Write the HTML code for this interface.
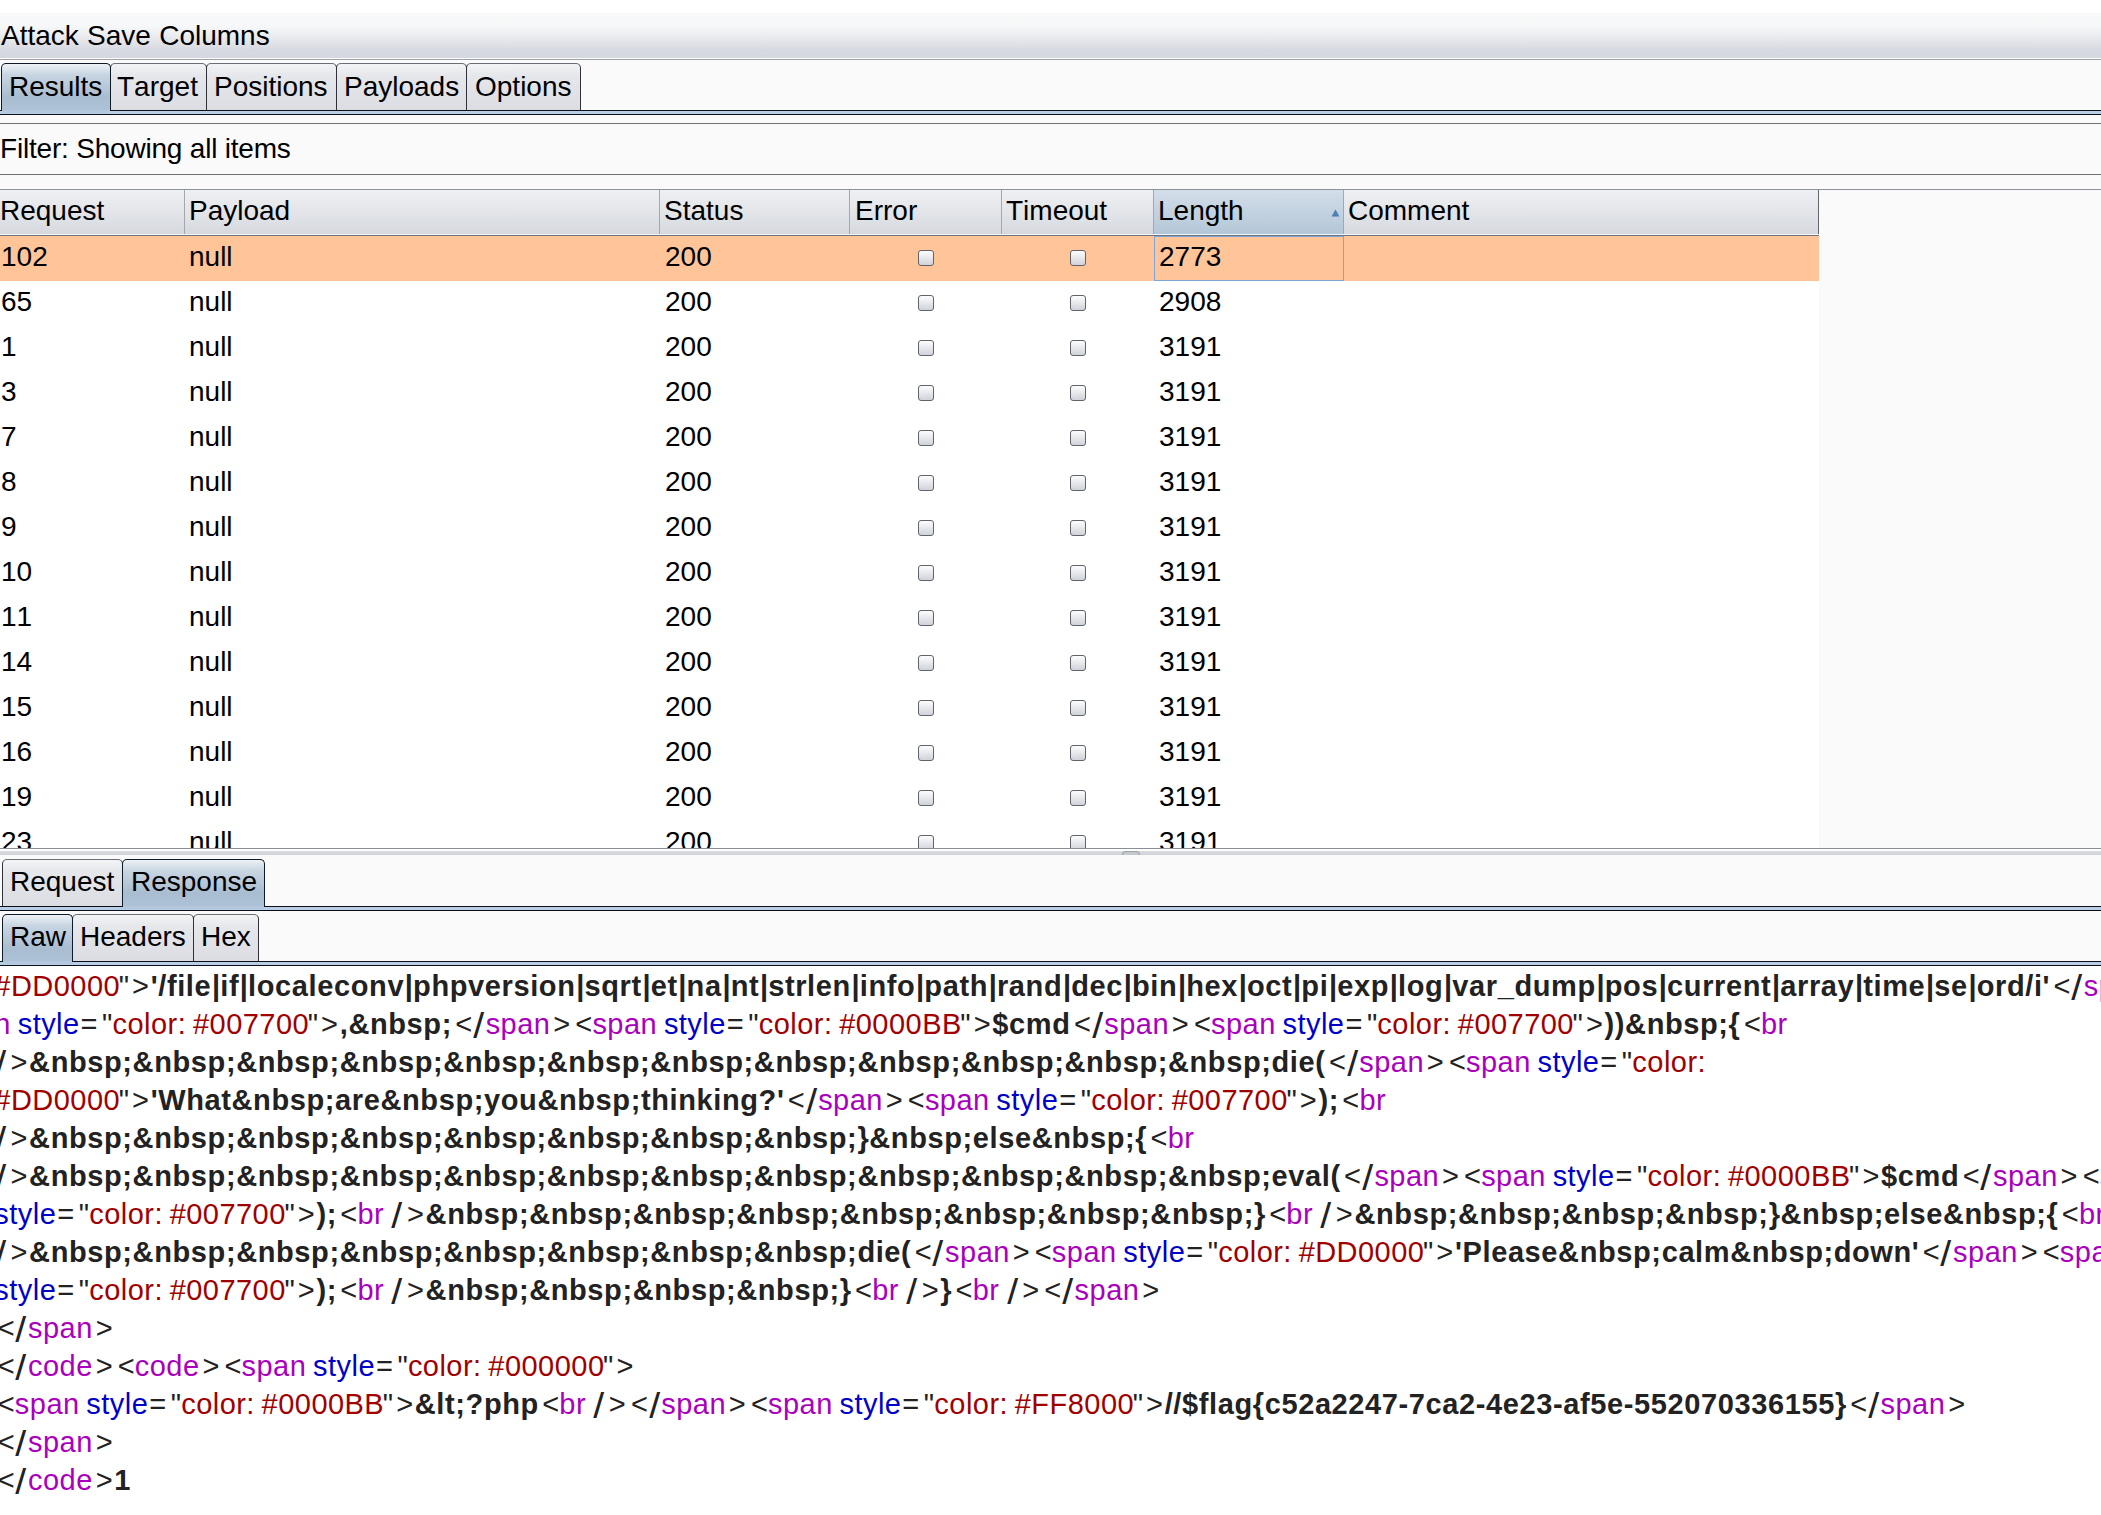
<!DOCTYPE html>
<html><head><meta charset="utf-8"><style>
html,body{margin:0;padding:0;}
body{width:2101px;height:1515px;position:relative;overflow:hidden;background:#fafafa;font-family:"Liberation Sans",sans-serif;color:#000;font-kerning:none;}
.abs{position:absolute;}
.t{position:absolute;white-space:pre;font-size:28px;line-height:28px;}
.tab{position:absolute;box-sizing:border-box;border:1px solid #2e313a;border-top-color:#6b6e76;border-bottom:none;border-radius:5px 5px 0 0;background:linear-gradient(#f3f4f6 0%,#e6e7eb 25%,#dcdde2 100%);}
.tab.sel{border-color:#0f1a28;background:linear-gradient(#eef2f6 0%,#c9d6e2 22%,#a9bdd1 70%,#adc2d6 100%);}
.tab span{position:absolute;white-space:pre;font-size:28px;line-height:28px;}
.hl{position:absolute;left:0;width:2101px;height:1px;}
.hdr{position:absolute;top:190px;height:44px;box-sizing:border-box;border-right:1px solid #a3a7ae;background:linear-gradient(#eff0f3,#d6d9df);}
.hdr.sort{background:linear-gradient(#d3dee9,#b3c6d7);}
.cb{position:absolute;width:16px;height:16px;box-sizing:border-box;border:1px solid #5f636b;border-radius:3px;background:linear-gradient(#fdfdfe,#d0d3da);}
.ln{position:absolute;left:0;white-space:pre;font-size:29px;line-height:29px;font-kerning:none;}
.p{color:#222;}
.n{color:#aa00be;}
.a{color:#0000c8;}
.v{color:#a00000;}
.b{font-weight:bold;color:#222;}
</style></head><body>
<div class="abs" style="left:0px;top:0px;width:2101px;height:13px;background:#fff;"></div>
<div class="abs" style="left:0px;top:13px;width:2101px;height:45px;background:linear-gradient(#f8f9f9 0%,#f6f7f8 30%,#e4e6ea 62%,#d6d9e0 82%,#d5d8df 100%);"></div>
<div class="abs" style="left:0px;top:58px;width:2101px;height:1px;background:#fdfdfd;"></div>
<div class="abs" style="left:0px;top:59px;width:2101px;height:1px;background:#9da0a7;"></div>
<div class="t" style="left:1px;top:22px;word-spacing:0.5px;">Attack Save Columns</div>
<div class="tab" style="left:110px;top:63px;width:97px;height:47px"><span style="left:6px;top:9px">Target</span></div>
<div class="tab" style="left:206px;top:63px;width:131px;height:47px"><span style="left:7px;top:9px">Positions</span></div>
<div class="tab" style="left:336px;top:63px;width:131px;height:47px"><span style="left:7px;top:9px">Payloads</span></div>
<div class="tab" style="left:466px;top:63px;width:115px;height:47px"><span style="left:8px;top:9px">Options</span></div>
<div class="hl" style="top:110px;background:#0c0e1a"></div>
<div class="hl" style="top:111px;height:3px;background:#b9cee4"></div>
<div class="hl" style="top:114px;background:#0c0e1a"></div>
<div class="tab sel" style="left:1px;top:63px;width:110px;height:48px"><span style="left:7px;top:9px">Results</span></div>
<div class="abs" style="left:2px;top:110px;width:108px;height:3px;background:#b3c8dd"></div>
<div class="abs" style="left:0px;top:123px;width:2101px;height:1px;background:#727272;"></div>
<div class="t" style="left:0px;top:135px;letter-spacing:-0.2px;">Filter: Showing all items</div>
<div class="abs" style="left:0px;top:174px;width:2101px;height:1px;background:#727272;"></div>
<div class="abs" style="left:0px;top:189px;width:2101px;height:1px;background:#8e939b;"></div>
<div class="hdr" style="left:0px;width:185px;"><span class="t" style="left:0px;top:7px">Request</span></div>
<div class="hdr" style="left:185px;width:475px;"><span class="t" style="left:4px;top:7px">Payload</span></div>
<div class="hdr" style="left:660px;width:190px;"><span class="t" style="left:4px;top:7px">Status</span></div>
<div class="hdr" style="left:850px;width:152px;"><span class="t" style="left:5px;top:7px">Error</span></div>
<div class="hdr" style="left:1002px;width:152px;"><span class="t" style="left:4px;top:7px">Timeout</span></div>
<div class="hdr sort" style="left:1154px;width:190px;"><span class="t" style="left:4px;top:7px">Length</span></div>
<div class="hdr" style="left:1344px;width:475px;border-right-color:#62656d;"><span class="t" style="left:4px;top:7px">Comment</span></div>
<div class="abs" style="left:0px;top:234px;width:1819px;height:1px;background:#f3f5f9;"></div>
<div class="abs" style="left:0px;top:235px;width:1819px;height:1px;background:#70747c;"></div>
<svg class="abs" style="left:1331px;top:209px" width="9" height="8"><path d="M4.5 0.5 L8.5 7.5 L0.5 7.5 Z" fill="#4f7fb3"/></svg>
<div class="abs" style="left:0;top:236px;width:2101px;height:612px;overflow:hidden">
<div class="abs" style="left:0;top:0px;width:1819px;height:45px;background:#ffc599">
<span class="t" style="left:1px;top:7px">102</span>
<span class="t" style="left:189px;top:7px">null</span>
<span class="t" style="left:665px;top:7px">200</span>
<div class="cb" style="left:918px;top:14px"></div>
<div class="cb" style="left:1070px;top:14px"></div>
<span class="t" style="left:1159px;top:7px">2773</span>
<div class="abs" style="left:1154px;top:0;width:190px;height:45px;box-sizing:border-box;border:1px solid #7ea6d6"></div>
</div>
<div class="abs" style="left:0;top:45px;width:1819px;height:45px;background:#fff">
<span class="t" style="left:1px;top:7px">65</span>
<span class="t" style="left:189px;top:7px">null</span>
<span class="t" style="left:665px;top:7px">200</span>
<div class="cb" style="left:918px;top:14px"></div>
<div class="cb" style="left:1070px;top:14px"></div>
<span class="t" style="left:1159px;top:7px">2908</span>
</div>
<div class="abs" style="left:0;top:90px;width:1819px;height:45px;background:#fff">
<span class="t" style="left:1px;top:7px">1</span>
<span class="t" style="left:189px;top:7px">null</span>
<span class="t" style="left:665px;top:7px">200</span>
<div class="cb" style="left:918px;top:14px"></div>
<div class="cb" style="left:1070px;top:14px"></div>
<span class="t" style="left:1159px;top:7px">3191</span>
</div>
<div class="abs" style="left:0;top:135px;width:1819px;height:45px;background:#fff">
<span class="t" style="left:1px;top:7px">3</span>
<span class="t" style="left:189px;top:7px">null</span>
<span class="t" style="left:665px;top:7px">200</span>
<div class="cb" style="left:918px;top:14px"></div>
<div class="cb" style="left:1070px;top:14px"></div>
<span class="t" style="left:1159px;top:7px">3191</span>
</div>
<div class="abs" style="left:0;top:180px;width:1819px;height:45px;background:#fff">
<span class="t" style="left:1px;top:7px">7</span>
<span class="t" style="left:189px;top:7px">null</span>
<span class="t" style="left:665px;top:7px">200</span>
<div class="cb" style="left:918px;top:14px"></div>
<div class="cb" style="left:1070px;top:14px"></div>
<span class="t" style="left:1159px;top:7px">3191</span>
</div>
<div class="abs" style="left:0;top:225px;width:1819px;height:45px;background:#fff">
<span class="t" style="left:1px;top:7px">8</span>
<span class="t" style="left:189px;top:7px">null</span>
<span class="t" style="left:665px;top:7px">200</span>
<div class="cb" style="left:918px;top:14px"></div>
<div class="cb" style="left:1070px;top:14px"></div>
<span class="t" style="left:1159px;top:7px">3191</span>
</div>
<div class="abs" style="left:0;top:270px;width:1819px;height:45px;background:#fff">
<span class="t" style="left:1px;top:7px">9</span>
<span class="t" style="left:189px;top:7px">null</span>
<span class="t" style="left:665px;top:7px">200</span>
<div class="cb" style="left:918px;top:14px"></div>
<div class="cb" style="left:1070px;top:14px"></div>
<span class="t" style="left:1159px;top:7px">3191</span>
</div>
<div class="abs" style="left:0;top:315px;width:1819px;height:45px;background:#fff">
<span class="t" style="left:1px;top:7px">10</span>
<span class="t" style="left:189px;top:7px">null</span>
<span class="t" style="left:665px;top:7px">200</span>
<div class="cb" style="left:918px;top:14px"></div>
<div class="cb" style="left:1070px;top:14px"></div>
<span class="t" style="left:1159px;top:7px">3191</span>
</div>
<div class="abs" style="left:0;top:360px;width:1819px;height:45px;background:#fff">
<span class="t" style="left:1px;top:7px">11</span>
<span class="t" style="left:189px;top:7px">null</span>
<span class="t" style="left:665px;top:7px">200</span>
<div class="cb" style="left:918px;top:14px"></div>
<div class="cb" style="left:1070px;top:14px"></div>
<span class="t" style="left:1159px;top:7px">3191</span>
</div>
<div class="abs" style="left:0;top:405px;width:1819px;height:45px;background:#fff">
<span class="t" style="left:1px;top:7px">14</span>
<span class="t" style="left:189px;top:7px">null</span>
<span class="t" style="left:665px;top:7px">200</span>
<div class="cb" style="left:918px;top:14px"></div>
<div class="cb" style="left:1070px;top:14px"></div>
<span class="t" style="left:1159px;top:7px">3191</span>
</div>
<div class="abs" style="left:0;top:450px;width:1819px;height:45px;background:#fff">
<span class="t" style="left:1px;top:7px">15</span>
<span class="t" style="left:189px;top:7px">null</span>
<span class="t" style="left:665px;top:7px">200</span>
<div class="cb" style="left:918px;top:14px"></div>
<div class="cb" style="left:1070px;top:14px"></div>
<span class="t" style="left:1159px;top:7px">3191</span>
</div>
<div class="abs" style="left:0;top:495px;width:1819px;height:45px;background:#fff">
<span class="t" style="left:1px;top:7px">16</span>
<span class="t" style="left:189px;top:7px">null</span>
<span class="t" style="left:665px;top:7px">200</span>
<div class="cb" style="left:918px;top:14px"></div>
<div class="cb" style="left:1070px;top:14px"></div>
<span class="t" style="left:1159px;top:7px">3191</span>
</div>
<div class="abs" style="left:0;top:540px;width:1819px;height:45px;background:#fff">
<span class="t" style="left:1px;top:7px">19</span>
<span class="t" style="left:189px;top:7px">null</span>
<span class="t" style="left:665px;top:7px">200</span>
<div class="cb" style="left:918px;top:14px"></div>
<div class="cb" style="left:1070px;top:14px"></div>
<span class="t" style="left:1159px;top:7px">3191</span>
</div>
<div class="abs" style="left:0;top:585px;width:1819px;height:45px;background:#fff">
<span class="t" style="left:1px;top:7px">23</span>
<span class="t" style="left:189px;top:7px">null</span>
<span class="t" style="left:665px;top:7px">200</span>
<div class="cb" style="left:918px;top:14px"></div>
<div class="cb" style="left:1070px;top:14px"></div>
<span class="t" style="left:1159px;top:7px">3191</span>
</div>
</div>
<div class="abs" style="left:0px;top:848px;width:2101px;height:1px;background:#8a8e97;"></div>
<div class="abs" style="left:0px;top:849px;width:2101px;height:2px;background:#fff;"></div>
<div class="abs" style="left:0px;top:851px;width:2101px;height:4px;background:linear-gradient(#d9dce2,#cfd3d9);"></div>
<div class="abs" style="left:1122px;top:851px;width:18px;height:4px;box-sizing:border-box;border:1px solid #9ea2aa;border-bottom:none;border-radius:4px 4px 0 0;background:#c3c7ce"></div>
<div class="tab" style="left:2px;top:859px;width:121px;height:47px"><span style="left:7px;top:8px">Request</span></div>
<div class="hl" style="top:906px;background:#0c0e1a"></div>
<div class="hl" style="top:907px;height:3px;background:#b9cee4"></div>
<div class="hl" style="top:910px;background:#0c0e1a"></div>
<div class="tab sel" style="left:122px;top:859px;width:143px;height:48px"><span style="left:8px;top:8px">Response</span></div>
<div class="abs" style="left:123px;top:906px;width:141px;height:3px;background:#b3c8dd"></div>
<div class="tab" style="left:72px;top:914px;width:122px;height:47px"><span style="left:7px;top:8px">Headers</span></div>
<div class="tab" style="left:193px;top:914px;width:66px;height:47px"><span style="left:7px;top:8px">Hex</span></div>
<div class="hl" style="top:961px;background:#0c0e1a"></div>
<div class="hl" style="top:962px;height:3px;background:#b9cee4"></div>
<div class="hl" style="top:965px;background:#0c0e1a"></div>
<div class="tab sel" style="left:2px;top:914px;width:71px;height:48px"><span style="left:7px;top:8px">Raw</span></div>
<div class="abs" style="left:3px;top:961px;width:69px;height:3px;background:#b3c8dd"></div>
<div class="abs" style="left:0;top:966px;width:2101px;height:549px;background:#fff;overflow:hidden">
<div class="ln" style="left:-5.658px;top:6px"><span class="v" style="letter-spacing:0.463px">#DD0000</span><span class="p" style="letter-spacing:0.189px;margin-left:-1.40px">&quot;</span><span class="p" style="letter-spacing:1.729px;margin-left:2.85px">&gt;</span><span class="b" style="letter-spacing:0.611px">&#x27;/file</span><span class="b" style="letter-spacing:0.131px;margin-left:0.71px">|</span><span class="b" style="letter-spacing:0.611px">if</span><span class="b" style="letter-spacing:0.131px;margin-left:0.71px">|</span><span class="b" style="letter-spacing:0.611px">localeconv</span><span class="b" style="letter-spacing:0.131px;margin-left:0.71px">|</span><span class="b" style="letter-spacing:0.611px">phpversion</span><span class="b" style="letter-spacing:0.131px;margin-left:0.71px">|</span><span class="b" style="letter-spacing:0.611px">sqrt</span><span class="b" style="letter-spacing:0.131px;margin-left:0.71px">|</span><span class="b" style="letter-spacing:0.611px">et</span><span class="b" style="letter-spacing:0.131px;margin-left:0.71px">|</span><span class="b" style="letter-spacing:0.611px">na</span><span class="b" style="letter-spacing:0.131px;margin-left:0.71px">|</span><span class="b" style="letter-spacing:0.611px">nt</span><span class="b" style="letter-spacing:0.131px;margin-left:0.71px">|</span><span class="b" style="letter-spacing:0.611px">strlen</span><span class="b" style="letter-spacing:0.131px;margin-left:0.71px">|</span><span class="b" style="letter-spacing:0.611px">info</span><span class="b" style="letter-spacing:0.131px;margin-left:0.71px">|</span><span class="b" style="letter-spacing:0.611px">path</span><span class="b" style="letter-spacing:0.131px;margin-left:0.71px">|</span><span class="b" style="letter-spacing:0.611px">rand</span><span class="b" style="letter-spacing:0.131px;margin-left:0.71px">|</span><span class="b" style="letter-spacing:0.611px">dec</span><span class="b" style="letter-spacing:0.131px;margin-left:0.71px">|</span><span class="b" style="letter-spacing:0.611px">bin</span><span class="b" style="letter-spacing:0.131px;margin-left:0.71px">|</span><span class="b" style="letter-spacing:0.611px">hex</span><span class="b" style="letter-spacing:0.131px;margin-left:0.71px">|</span><span class="b" style="letter-spacing:0.611px">oct</span><span class="b" style="letter-spacing:0.131px;margin-left:0.71px">|</span><span class="b" style="letter-spacing:0.611px">pi</span><span class="b" style="letter-spacing:0.131px;margin-left:0.71px">|</span><span class="b" style="letter-spacing:0.611px">exp</span><span class="b" style="letter-spacing:0.131px;margin-left:0.71px">|</span><span class="b" style="letter-spacing:0.611px">log</span><span class="b" style="letter-spacing:0.131px;margin-left:0.71px">|</span><span class="b" style="letter-spacing:0.611px">var_dump</span><span class="b" style="letter-spacing:0.131px;margin-left:0.71px">|</span><span class="b" style="letter-spacing:0.611px">pos</span><span class="b" style="letter-spacing:0.131px;margin-left:0.71px">|</span><span class="b" style="letter-spacing:0.611px">current</span><span class="b" style="letter-spacing:0.131px;margin-left:0.71px">|</span><span class="b" style="letter-spacing:0.611px">array</span><span class="b" style="letter-spacing:0.131px;margin-left:0.71px">|</span><span class="b" style="letter-spacing:0.611px">time</span><span class="b" style="letter-spacing:0.131px;margin-left:0.71px">|</span><span class="b" style="letter-spacing:0.611px">se</span><span class="b" style="letter-spacing:0.131px;margin-left:0.71px">|</span><span class="b" style="letter-spacing:0.611px">ord/i&#x27;</span><span class="p" style="letter-spacing:0.159px;margin-left:3.39px">&lt;</span><span class="p" style="letter-spacing:2.549px;margin-left:2.61px;display:inline-block;transform:translateY(1.6px) scale(1.35,1.22)">/</span><span class="n" style="letter-spacing:0.463px">span</span><span class="p" style="letter-spacing:1.729px;margin-left:2.85px">&gt;</span><span class="p" style="letter-spacing:0.159px;margin-left:3.39px">&lt;</span><span class="n" style="letter-spacing:0.463px">span</span></div>
<div class="ln" style="left:-5.658px;top:44px"><span class="n" style="letter-spacing:0.463px">n</span><span class="p" style="letter-spacing:-1.323px"> </span><span class="a" style="letter-spacing:0.463px">style</span><span class="p" style="letter-spacing:5.934px;margin-left:0.94px">=</span><span class="p" style="letter-spacing:0.189px;margin-left:-1.40px">&quot;</span><span class="v" style="letter-spacing:0.463px">color:</span><span class="v" style="letter-spacing:-1.323px"> </span><span class="v" style="letter-spacing:0.463px">#007700</span><span class="p" style="letter-spacing:0.189px;margin-left:-1.40px">&quot;</span><span class="p" style="letter-spacing:1.729px;margin-left:2.85px">&gt;</span><span class="b" style="letter-spacing:0.611px">,&amp;nbsp;</span><span class="p" style="letter-spacing:0.159px;margin-left:3.39px">&lt;</span><span class="p" style="letter-spacing:2.549px;margin-left:2.61px;display:inline-block;transform:translateY(1.6px) scale(1.35,1.22)">/</span><span class="n" style="letter-spacing:0.463px">span</span><span class="p" style="letter-spacing:1.729px;margin-left:2.85px">&gt;</span><span class="p" style="letter-spacing:0.159px;margin-left:3.39px">&lt;</span><span class="n" style="letter-spacing:0.463px">span</span><span class="p" style="letter-spacing:-1.323px"> </span><span class="a" style="letter-spacing:0.463px">style</span><span class="p" style="letter-spacing:5.934px;margin-left:0.94px">=</span><span class="p" style="letter-spacing:0.189px;margin-left:-1.40px">&quot;</span><span class="v" style="letter-spacing:0.463px">color:</span><span class="v" style="letter-spacing:-1.323px"> </span><span class="v" style="letter-spacing:0.463px">#0000BB</span><span class="p" style="letter-spacing:0.189px;margin-left:-1.40px">&quot;</span><span class="p" style="letter-spacing:1.729px;margin-left:2.85px">&gt;</span><span class="b" style="letter-spacing:0.611px">$cmd</span><span class="p" style="letter-spacing:0.159px;margin-left:3.39px">&lt;</span><span class="p" style="letter-spacing:2.549px;margin-left:2.61px;display:inline-block;transform:translateY(1.6px) scale(1.35,1.22)">/</span><span class="n" style="letter-spacing:0.463px">span</span><span class="p" style="letter-spacing:1.729px;margin-left:2.85px">&gt;</span><span class="p" style="letter-spacing:0.159px;margin-left:3.39px">&lt;</span><span class="n" style="letter-spacing:0.463px">span</span><span class="p" style="letter-spacing:-1.323px"> </span><span class="a" style="letter-spacing:0.463px">style</span><span class="p" style="letter-spacing:5.934px;margin-left:0.94px">=</span><span class="p" style="letter-spacing:0.189px;margin-left:-1.40px">&quot;</span><span class="v" style="letter-spacing:0.463px">color:</span><span class="v" style="letter-spacing:-1.323px"> </span><span class="v" style="letter-spacing:0.463px">#007700</span><span class="p" style="letter-spacing:0.189px;margin-left:-1.40px">&quot;</span><span class="p" style="letter-spacing:1.729px;margin-left:2.85px">&gt;</span><span class="b" style="letter-spacing:0.611px">))&amp;nbsp;{</span><span class="p" style="letter-spacing:0.159px;margin-left:3.39px">&lt;</span><span class="n" style="letter-spacing:0.463px">br</span></div>
<div class="ln" style="left:-5.658px;top:82px"><span class="p" style="letter-spacing:2.549px;margin-left:2.61px;display:inline-block;transform:translateY(1.6px) scale(1.35,1.22)">/</span><span class="p" style="letter-spacing:1.729px;margin-left:2.85px">&gt;</span><span class="b" style="letter-spacing:0.611px">&amp;nbsp;&amp;nbsp;&amp;nbsp;&amp;nbsp;&amp;nbsp;&amp;nbsp;&amp;nbsp;&amp;nbsp;&amp;nbsp;&amp;nbsp;&amp;nbsp;&amp;nbsp;die(</span><span class="p" style="letter-spacing:0.159px;margin-left:3.39px">&lt;</span><span class="p" style="letter-spacing:2.549px;margin-left:2.61px;display:inline-block;transform:translateY(1.6px) scale(1.35,1.22)">/</span><span class="n" style="letter-spacing:0.463px">span</span><span class="p" style="letter-spacing:1.729px;margin-left:2.85px">&gt;</span><span class="p" style="letter-spacing:0.159px;margin-left:3.39px">&lt;</span><span class="n" style="letter-spacing:0.463px">span</span><span class="p" style="letter-spacing:-1.323px"> </span><span class="a" style="letter-spacing:0.463px">style</span><span class="p" style="letter-spacing:5.934px;margin-left:0.94px">=</span><span class="p" style="letter-spacing:0.189px;margin-left:-1.40px">&quot;</span><span class="v" style="letter-spacing:0.463px">color:</span></div>
<div class="ln" style="left:-5.658px;top:120px"><span class="v" style="letter-spacing:0.463px">#DD0000</span><span class="p" style="letter-spacing:0.189px;margin-left:-1.40px">&quot;</span><span class="p" style="letter-spacing:1.729px;margin-left:2.85px">&gt;</span><span class="b" style="letter-spacing:0.611px">&#x27;What&amp;nbsp;are&amp;nbsp;you&amp;nbsp;thinking?&#x27;</span><span class="p" style="letter-spacing:0.159px;margin-left:3.39px">&lt;</span><span class="p" style="letter-spacing:2.549px;margin-left:2.61px;display:inline-block;transform:translateY(1.6px) scale(1.35,1.22)">/</span><span class="n" style="letter-spacing:0.463px">span</span><span class="p" style="letter-spacing:1.729px;margin-left:2.85px">&gt;</span><span class="p" style="letter-spacing:0.159px;margin-left:3.39px">&lt;</span><span class="n" style="letter-spacing:0.463px">span</span><span class="p" style="letter-spacing:-1.323px"> </span><span class="a" style="letter-spacing:0.463px">style</span><span class="p" style="letter-spacing:5.934px;margin-left:0.94px">=</span><span class="p" style="letter-spacing:0.189px;margin-left:-1.40px">&quot;</span><span class="v" style="letter-spacing:0.463px">color:</span><span class="v" style="letter-spacing:-1.323px"> </span><span class="v" style="letter-spacing:0.463px">#007700</span><span class="p" style="letter-spacing:0.189px;margin-left:-1.40px">&quot;</span><span class="p" style="letter-spacing:1.729px;margin-left:2.85px">&gt;</span><span class="b" style="letter-spacing:0.611px">);</span><span class="p" style="letter-spacing:0.159px;margin-left:3.39px">&lt;</span><span class="n" style="letter-spacing:0.463px">br</span></div>
<div class="ln" style="left:-5.658px;top:158px"><span class="p" style="letter-spacing:2.549px;margin-left:2.61px;display:inline-block;transform:translateY(1.6px) scale(1.35,1.22)">/</span><span class="p" style="letter-spacing:1.729px;margin-left:2.85px">&gt;</span><span class="b" style="letter-spacing:0.611px">&amp;nbsp;&amp;nbsp;&amp;nbsp;&amp;nbsp;&amp;nbsp;&amp;nbsp;&amp;nbsp;&amp;nbsp;}&amp;nbsp;else&amp;nbsp;{</span><span class="p" style="letter-spacing:0.159px;margin-left:3.39px">&lt;</span><span class="n" style="letter-spacing:0.463px">br</span></div>
<div class="ln" style="left:-5.658px;top:196px"><span class="p" style="letter-spacing:2.549px;margin-left:2.61px;display:inline-block;transform:translateY(1.6px) scale(1.35,1.22)">/</span><span class="p" style="letter-spacing:1.729px;margin-left:2.85px">&gt;</span><span class="b" style="letter-spacing:0.611px">&amp;nbsp;&amp;nbsp;&amp;nbsp;&amp;nbsp;&amp;nbsp;&amp;nbsp;&amp;nbsp;&amp;nbsp;&amp;nbsp;&amp;nbsp;&amp;nbsp;&amp;nbsp;eval(</span><span class="p" style="letter-spacing:0.159px;margin-left:3.39px">&lt;</span><span class="p" style="letter-spacing:2.549px;margin-left:2.61px;display:inline-block;transform:translateY(1.6px) scale(1.35,1.22)">/</span><span class="n" style="letter-spacing:0.463px">span</span><span class="p" style="letter-spacing:1.729px;margin-left:2.85px">&gt;</span><span class="p" style="letter-spacing:0.159px;margin-left:3.39px">&lt;</span><span class="n" style="letter-spacing:0.463px">span</span><span class="p" style="letter-spacing:-1.323px"> </span><span class="a" style="letter-spacing:0.463px">style</span><span class="p" style="letter-spacing:5.934px;margin-left:0.94px">=</span><span class="p" style="letter-spacing:0.189px;margin-left:-1.40px">&quot;</span><span class="v" style="letter-spacing:0.463px">color:</span><span class="v" style="letter-spacing:-1.323px"> </span><span class="v" style="letter-spacing:0.463px">#0000BB</span><span class="p" style="letter-spacing:0.189px;margin-left:-1.40px">&quot;</span><span class="p" style="letter-spacing:1.729px;margin-left:2.85px">&gt;</span><span class="b" style="letter-spacing:0.611px">$cmd</span><span class="p" style="letter-spacing:0.159px;margin-left:3.39px">&lt;</span><span class="p" style="letter-spacing:2.549px;margin-left:2.61px;display:inline-block;transform:translateY(1.6px) scale(1.35,1.22)">/</span><span class="n" style="letter-spacing:0.463px">span</span><span class="p" style="letter-spacing:1.729px;margin-left:2.85px">&gt;</span><span class="p" style="letter-spacing:0.159px;margin-left:3.39px">&lt;</span><span class="n" style="letter-spacing:0.463px">span</span><span class="p" style="letter-spacing:-1.323px"> </span></div>
<div class="ln" style="left:-5.658px;top:234px"><span class="a" style="letter-spacing:0.463px">style</span><span class="p" style="letter-spacing:5.934px;margin-left:0.94px">=</span><span class="p" style="letter-spacing:0.189px;margin-left:-1.40px">&quot;</span><span class="v" style="letter-spacing:0.463px">color:</span><span class="v" style="letter-spacing:-1.323px"> </span><span class="v" style="letter-spacing:0.463px">#007700</span><span class="p" style="letter-spacing:0.189px;margin-left:-1.40px">&quot;</span><span class="p" style="letter-spacing:1.729px;margin-left:2.85px">&gt;</span><span class="b" style="letter-spacing:0.611px">);</span><span class="p" style="letter-spacing:0.159px;margin-left:3.39px">&lt;</span><span class="n" style="letter-spacing:0.463px">br</span><span class="p" style="letter-spacing:-1.323px"> </span><span class="p" style="letter-spacing:2.549px;margin-left:2.61px;display:inline-block;transform:translateY(1.6px) scale(1.35,1.22)">/</span><span class="p" style="letter-spacing:1.729px;margin-left:2.85px">&gt;</span><span class="b" style="letter-spacing:0.611px">&amp;nbsp;&amp;nbsp;&amp;nbsp;&amp;nbsp;&amp;nbsp;&amp;nbsp;&amp;nbsp;&amp;nbsp;}</span><span class="p" style="letter-spacing:0.159px;margin-left:3.39px">&lt;</span><span class="n" style="letter-spacing:0.463px">br</span><span class="p" style="letter-spacing:-1.323px"> </span><span class="p" style="letter-spacing:2.549px;margin-left:2.61px;display:inline-block;transform:translateY(1.6px) scale(1.35,1.22)">/</span><span class="p" style="letter-spacing:1.729px;margin-left:2.85px">&gt;</span><span class="b" style="letter-spacing:0.611px">&amp;nbsp;&amp;nbsp;&amp;nbsp;&amp;nbsp;}&amp;nbsp;else&amp;nbsp;{</span><span class="p" style="letter-spacing:0.159px;margin-left:3.39px">&lt;</span><span class="n" style="letter-spacing:0.463px">br</span><span class="p" style="letter-spacing:-1.323px"> </span></div>
<div class="ln" style="left:-5.658px;top:272px"><span class="p" style="letter-spacing:2.549px;margin-left:2.61px;display:inline-block;transform:translateY(1.6px) scale(1.35,1.22)">/</span><span class="p" style="letter-spacing:1.729px;margin-left:2.85px">&gt;</span><span class="b" style="letter-spacing:0.611px">&amp;nbsp;&amp;nbsp;&amp;nbsp;&amp;nbsp;&amp;nbsp;&amp;nbsp;&amp;nbsp;&amp;nbsp;die(</span><span class="p" style="letter-spacing:0.159px;margin-left:3.39px">&lt;</span><span class="p" style="letter-spacing:2.549px;margin-left:2.61px;display:inline-block;transform:translateY(1.6px) scale(1.35,1.22)">/</span><span class="n" style="letter-spacing:0.463px">span</span><span class="p" style="letter-spacing:1.729px;margin-left:2.85px">&gt;</span><span class="p" style="letter-spacing:0.159px;margin-left:3.39px">&lt;</span><span class="n" style="letter-spacing:0.463px">span</span><span class="p" style="letter-spacing:-1.323px"> </span><span class="a" style="letter-spacing:0.463px">style</span><span class="p" style="letter-spacing:5.934px;margin-left:0.94px">=</span><span class="p" style="letter-spacing:0.189px;margin-left:-1.40px">&quot;</span><span class="v" style="letter-spacing:0.463px">color:</span><span class="v" style="letter-spacing:-1.323px"> </span><span class="v" style="letter-spacing:0.463px">#DD0000</span><span class="p" style="letter-spacing:0.189px;margin-left:-1.40px">&quot;</span><span class="p" style="letter-spacing:1.729px;margin-left:2.85px">&gt;</span><span class="b" style="letter-spacing:0.611px">&#x27;Please&amp;nbsp;calm&amp;nbsp;down&#x27;</span><span class="p" style="letter-spacing:0.159px;margin-left:3.39px">&lt;</span><span class="p" style="letter-spacing:2.549px;margin-left:2.61px;display:inline-block;transform:translateY(1.6px) scale(1.35,1.22)">/</span><span class="n" style="letter-spacing:0.463px">span</span><span class="p" style="letter-spacing:1.729px;margin-left:2.85px">&gt;</span><span class="p" style="letter-spacing:0.159px;margin-left:3.39px">&lt;</span><span class="n" style="letter-spacing:0.463px">span</span><span class="p" style="letter-spacing:-1.323px"> </span></div>
<div class="ln" style="left:-5.658px;top:310px"><span class="a" style="letter-spacing:0.463px">style</span><span class="p" style="letter-spacing:5.934px;margin-left:0.94px">=</span><span class="p" style="letter-spacing:0.189px;margin-left:-1.40px">&quot;</span><span class="v" style="letter-spacing:0.463px">color:</span><span class="v" style="letter-spacing:-1.323px"> </span><span class="v" style="letter-spacing:0.463px">#007700</span><span class="p" style="letter-spacing:0.189px;margin-left:-1.40px">&quot;</span><span class="p" style="letter-spacing:1.729px;margin-left:2.85px">&gt;</span><span class="b" style="letter-spacing:0.611px">);</span><span class="p" style="letter-spacing:0.159px;margin-left:3.39px">&lt;</span><span class="n" style="letter-spacing:0.463px">br</span><span class="p" style="letter-spacing:-1.323px"> </span><span class="p" style="letter-spacing:2.549px;margin-left:2.61px;display:inline-block;transform:translateY(1.6px) scale(1.35,1.22)">/</span><span class="p" style="letter-spacing:1.729px;margin-left:2.85px">&gt;</span><span class="b" style="letter-spacing:0.611px">&amp;nbsp;&amp;nbsp;&amp;nbsp;&amp;nbsp;}</span><span class="p" style="letter-spacing:0.159px;margin-left:3.39px">&lt;</span><span class="n" style="letter-spacing:0.463px">br</span><span class="p" style="letter-spacing:-1.323px"> </span><span class="p" style="letter-spacing:2.549px;margin-left:2.61px;display:inline-block;transform:translateY(1.6px) scale(1.35,1.22)">/</span><span class="p" style="letter-spacing:1.729px;margin-left:2.85px">&gt;</span><span class="b" style="letter-spacing:0.611px">}</span><span class="p" style="letter-spacing:0.159px;margin-left:3.39px">&lt;</span><span class="n" style="letter-spacing:0.463px">br</span><span class="p" style="letter-spacing:-1.323px"> </span><span class="p" style="letter-spacing:2.549px;margin-left:2.61px;display:inline-block;transform:translateY(1.6px) scale(1.35,1.22)">/</span><span class="p" style="letter-spacing:1.729px;margin-left:2.85px">&gt;</span><span class="p" style="letter-spacing:0.159px;margin-left:3.39px">&lt;</span><span class="p" style="letter-spacing:2.549px;margin-left:2.61px;display:inline-block;transform:translateY(1.6px) scale(1.35,1.22)">/</span><span class="n" style="letter-spacing:0.463px">span</span><span class="p" style="letter-spacing:1.729px;margin-left:2.85px">&gt;</span></div>
<div class="ln" style="left:-5.658px;top:348px"><span class="p" style="letter-spacing:0.159px;margin-left:3.39px">&lt;</span><span class="p" style="letter-spacing:2.549px;margin-left:2.61px;display:inline-block;transform:translateY(1.6px) scale(1.35,1.22)">/</span><span class="n" style="letter-spacing:0.463px">span</span><span class="p" style="letter-spacing:1.729px;margin-left:2.85px">&gt;</span></div>
<div class="ln" style="left:-5.658px;top:386px"><span class="p" style="letter-spacing:0.159px;margin-left:3.39px">&lt;</span><span class="p" style="letter-spacing:2.549px;margin-left:2.61px;display:inline-block;transform:translateY(1.6px) scale(1.35,1.22)">/</span><span class="n" style="letter-spacing:0.463px">code</span><span class="p" style="letter-spacing:1.729px;margin-left:2.85px">&gt;</span><span class="p" style="letter-spacing:0.159px;margin-left:3.39px">&lt;</span><span class="n" style="letter-spacing:0.463px">code</span><span class="p" style="letter-spacing:1.729px;margin-left:2.85px">&gt;</span><span class="p" style="letter-spacing:0.159px;margin-left:3.39px">&lt;</span><span class="n" style="letter-spacing:0.463px">span</span><span class="p" style="letter-spacing:-1.323px"> </span><span class="a" style="letter-spacing:0.463px">style</span><span class="p" style="letter-spacing:5.934px;margin-left:0.94px">=</span><span class="p" style="letter-spacing:0.189px;margin-left:-1.40px">&quot;</span><span class="v" style="letter-spacing:0.463px">color:</span><span class="v" style="letter-spacing:-1.323px"> </span><span class="v" style="letter-spacing:0.463px">#000000</span><span class="p" style="letter-spacing:0.189px;margin-left:-1.40px">&quot;</span><span class="p" style="letter-spacing:1.729px;margin-left:2.85px">&gt;</span></div>
<div class="ln" style="left:-5.658px;top:424px"><span class="p" style="letter-spacing:0.159px;margin-left:3.39px">&lt;</span><span class="n" style="letter-spacing:0.463px">span</span><span class="p" style="letter-spacing:-1.323px"> </span><span class="a" style="letter-spacing:0.463px">style</span><span class="p" style="letter-spacing:5.934px;margin-left:0.94px">=</span><span class="p" style="letter-spacing:0.189px;margin-left:-1.40px">&quot;</span><span class="v" style="letter-spacing:0.463px">color:</span><span class="v" style="letter-spacing:-1.323px"> </span><span class="v" style="letter-spacing:0.463px">#0000BB</span><span class="p" style="letter-spacing:0.189px;margin-left:-1.40px">&quot;</span><span class="p" style="letter-spacing:1.729px;margin-left:2.85px">&gt;</span><span class="b" style="letter-spacing:0.611px">&amp;lt;?php</span><span class="p" style="letter-spacing:0.159px;margin-left:3.39px">&lt;</span><span class="n" style="letter-spacing:0.463px">br</span><span class="p" style="letter-spacing:-1.323px"> </span><span class="p" style="letter-spacing:2.549px;margin-left:2.61px;display:inline-block;transform:translateY(1.6px) scale(1.35,1.22)">/</span><span class="p" style="letter-spacing:1.729px;margin-left:2.85px">&gt;</span><span class="p" style="letter-spacing:0.159px;margin-left:3.39px">&lt;</span><span class="p" style="letter-spacing:2.549px;margin-left:2.61px;display:inline-block;transform:translateY(1.6px) scale(1.35,1.22)">/</span><span class="n" style="letter-spacing:0.463px">span</span><span class="p" style="letter-spacing:1.729px;margin-left:2.85px">&gt;</span><span class="p" style="letter-spacing:0.159px;margin-left:3.39px">&lt;</span><span class="n" style="letter-spacing:0.463px">span</span><span class="p" style="letter-spacing:-1.323px"> </span><span class="a" style="letter-spacing:0.463px">style</span><span class="p" style="letter-spacing:5.934px;margin-left:0.94px">=</span><span class="p" style="letter-spacing:0.189px;margin-left:-1.40px">&quot;</span><span class="v" style="letter-spacing:0.463px">color:</span><span class="v" style="letter-spacing:-1.323px"> </span><span class="v" style="letter-spacing:0.463px">#FF8000</span><span class="p" style="letter-spacing:0.189px;margin-left:-1.40px">&quot;</span><span class="p" style="letter-spacing:1.729px;margin-left:2.85px">&gt;</span><span class="b" style="letter-spacing:0.611px">//$flag{c52a2247-7ca2-4e23-af5e-552070336155}</span><span class="p" style="letter-spacing:0.159px;margin-left:3.39px">&lt;</span><span class="p" style="letter-spacing:2.549px;margin-left:2.61px;display:inline-block;transform:translateY(1.6px) scale(1.35,1.22)">/</span><span class="n" style="letter-spacing:0.463px">span</span><span class="p" style="letter-spacing:1.729px;margin-left:2.85px">&gt;</span></div>
<div class="ln" style="left:-5.658px;top:462px"><span class="p" style="letter-spacing:0.159px;margin-left:3.39px">&lt;</span><span class="p" style="letter-spacing:2.549px;margin-left:2.61px;display:inline-block;transform:translateY(1.6px) scale(1.35,1.22)">/</span><span class="n" style="letter-spacing:0.463px">span</span><span class="p" style="letter-spacing:1.729px;margin-left:2.85px">&gt;</span></div>
<div class="ln" style="left:-5.658px;top:500px"><span class="p" style="letter-spacing:0.159px;margin-left:3.39px">&lt;</span><span class="p" style="letter-spacing:2.549px;margin-left:2.61px;display:inline-block;transform:translateY(1.6px) scale(1.35,1.22)">/</span><span class="n" style="letter-spacing:0.463px">code</span><span class="p" style="letter-spacing:1.729px;margin-left:2.85px">&gt;</span><span class="b" style="letter-spacing:0.611px">1</span></div>
</div>
</body></html>
